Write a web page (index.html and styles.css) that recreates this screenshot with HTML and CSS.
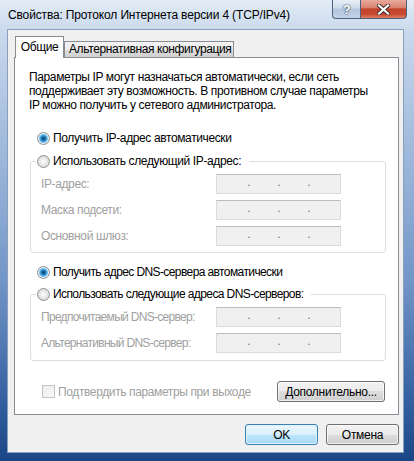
FILE: index.html
```html
<!DOCTYPE html>
<html lang="ru">
<head>
    <meta charset="UTF-8">
    <title>Свойства: Протокол Интернета версии 4 (TCP/IPv4)</title>
    <link rel="stylesheet" href="styles.css">
</head>
<body>
    <div class="window">
        <div class="titlebar">
            <span class="title">Свойства: Протокол Интернета версии 4 (TCP/IPv4)</span>
            <div class="caption-buttons">
                <span class="cap-btn help">?</span>
                <span class="cap-btn close">
                    <svg width="13" height="11" viewBox="0 0 13 11">
                        <path d="M2 1.5 L11 9.5 M11 1.5 L2 9.5" stroke="#3b2a28" stroke-width="4" stroke-linecap="square"/>
                        <path d="M2 1.5 L11 9.5 M11 1.5 L2 9.5" stroke="#ffffff" stroke-width="2.2" stroke-linecap="square"/>
                    </svg>
                </span>
            </div>
        </div>

        <div class="client">
            <div class="tabs">
                <span class="tab active">Общие</span>
                <span class="tab">Альтернативная конфигурация</span>
            </div>

            <div class="panel">
                <p class="intro">Параметры IP могут назначаться автоматически, если сеть<br>поддерживает эту возможность. В противном случае параметры<br>IP можно получить у сетевого администратора.</p>

                <div class="radio-row first"><span class="radio checked"></span>Получить IP-адрес автоматически</div>
                <fieldset class="group">
                    <legend class="radio-row"><span class="radio"></span>Использовать следующий IP-адрес:</legend>
                    <div class="field"><span class="field-label">IP-адрес:</span><span class="ip-box"><span>.</span><span>.</span><span>.</span></span></div>
                    <div class="field"><span class="field-label">Маска подсети:</span><span class="ip-box"><span>.</span><span>.</span><span>.</span></span></div>
                    <div class="field"><span class="field-label">Основной шлюз:</span><span class="ip-box"><span>.</span><span>.</span><span>.</span></span></div>
                </fieldset>

                <div class="radio-row second dns"><span class="radio checked"></span>Получить адрес DNS-сервера автоматически</div>
                <fieldset class="group dns">
                    <legend class="radio-row"><span class="radio"></span>Использовать следующие адреса DNS-серверов:</legend>
                    <div class="field"><span class="field-label">Предпочитаемый DNS-сервер:</span><span class="ip-box"><span>.</span><span>.</span><span>.</span></span></div>
                    <div class="field"><span class="field-label">Альтернативный DNS-сервер:</span><span class="ip-box"><span>.</span><span>.</span><span>.</span></span></div>
                </fieldset>

                <div class="panel-footer">
                    <span class="check-row"><span class="checkbox"></span>Подтвердить параметры при выходе</span>
                    <button class="btn advanced">Дополнительно...</button>
                </div>
            </div>

            <div class="dialog-buttons">
                <button class="btn default">OK</button>
                <button class="btn">Отмена</button>
            </div>
        </div>
    </div>
</body>
</html>
```

FILE: styles.css
```css
body {
    margin: 0;
    font-family: "Liberation Sans", "DejaVu Sans", sans-serif;
    font-size: 12px;
    letter-spacing: -0.38px;
    color: #000;
}

.window {
    width: 414px;
    height: 461px;
    box-sizing: border-box;
    display: flex;
    flex-direction: column;
    background: linear-gradient(to bottom, #e3ecf6 0px, #cbdaed 29px, #a9c1df 120px, #7396c8 280px, #2f5c9d 410px, #1b4686 461px);
}

/* title bar */
.titlebar {
    height: 29px;
    display: flex;
    align-items: flex-start;
}

.title {
    flex: 1;
    padding: 8px 0 0 8px;
    line-height: 14px;
    letter-spacing: -0.15px;
    white-space: nowrap;
}

.caption-buttons {
    display: flex;
    margin-right: 7px;
}

.cap-btn {
    height: 19px;
    box-sizing: border-box;
    border: 1px solid #4f6180;
    border-top: none;
    display: flex;
    align-items: center;
    justify-content: center;
}

.help {
    width: 29px;
    border-radius: 0 0 0 4px;
    background: linear-gradient(to bottom, #e7eef7, #cfdbea 45%, #b3c6dd 50%, #c3d3e7);
    color: #fff;
    font-weight: bold;
    font-size: 13px;
    text-shadow: 0 0 2px #2c3e58, 0 0 1px #2c3e58;
}

.close {
    width: 46px;
    border-left: none;
    border-radius: 0 0 4px 0;
    background: linear-gradient(to bottom, #e9aa9c, #d88270 42%, #c2432d 50%, #c7472f 78%, #de7d5f);
}

/* client area */
.client {
    flex: 1;
    margin: 0 10px 8px 7px;
    border: 1px solid #8a9ebd;
    background: #f0f0f0;
    padding: 6px 4px 0 6px;
    display: flex;
    flex-direction: column;
}

.tabs {
    display: flex;
    align-items: flex-end;
    height: 21px;
    padding-left: 1px;
}

.tab {
    box-sizing: border-box;
    height: 16px;
    width: 170px;
    border: 1px solid #898c95;
    border-bottom: none;
    padding-left: 4px;
    line-height: 15px;
    background: linear-gradient(to bottom, #f3f3f3, #ebebeb 50%, #dddddd 50%, #d0d0d0);
    white-space: nowrap;
}

.tab.active {
    position: relative;
    z-index: 1;
    height: 22px;
    width: 49px;
    margin-bottom: -1px;
    padding: 3px 0 0 0;
    text-align: center;
    background: #fff;
}

.panel {
    width: 385px;
    height: 358px;
    box-sizing: border-box;
    border: 1px solid #898c95;
    background: #fff;
    padding: 12px 12px 0 15px;
    display: flex;
    flex-direction: column;
}

.intro {
    margin: 0 0 0 -1px;
    line-height: 14px;
    white-space: nowrap;
}

.radio-row {
    display: flex;
    align-items: center;
    height: 16px;
    white-space: nowrap;
}

.radio-row.first {
    margin-top: 18px;
    padding-left: 7px;
}

.radio-row.second {
    margin-top: 11px;
    padding-left: 7px;
}

/* the DNS lines run a little wider in Liberation Sans */
.dns,
.dns legend {
    letter-spacing: -0.6px;
}

.dns .field-label {
    letter-spacing: -0.7px;
}

.radio {
    width: 13px;
    height: 13px;
    box-sizing: border-box;
    border-radius: 50%;
    border: 1px solid #8d8f91;
    margin-right: 3px;
    background: radial-gradient(circle at 50% 50%, #ffffff 0, #ececec 35%, #cfcfcf 100%);
}

.radio.checked {
    background: radial-gradient(circle at 50% 50%, #123f6a 0, #1d6da8 1.8px, #3b9ad6 3px, #8bcbf0 4.2px, #e4f1fa 5px, #d8d8d8 6px);
}

.group {
    margin: 7px 0 0 0;
    padding: 5px 0 6px 0;
    border: 1px solid #d5dfe5;
    border-radius: 3px;
    min-width: 0;
}

.group legend {
    margin-left: 5px;
    padding: 0 8px 0 1px;
}

.radio-row.second + .group {
    margin-top: 6px;
    padding-bottom: 7px;
}

.field {
    display: flex;
    align-items: center;
    height: 20px;
    padding-left: 10px;
    margin-top: 6px;
    color: #a0a0a0;
}

.field:first-of-type {
    margin-top: 0;
}

.field-label {
    width: 175px;
}

.ip-box {
    width: 125px;
    height: 20px;
    box-sizing: border-box;
    border: 1px solid #d9dbdf;
    border-top-color: #b9bcc1;
    background: #f0f0f0;
    padding-left: 17px;
    display: flex;
    line-height: 15px;
    color: #707070;
    letter-spacing: 0;
}

.ip-box span {
    width: 30px;
    text-align: center;
}

.panel-footer {
    margin-top: auto;
    margin-bottom: 12px;
    display: flex;
    align-items: center;
    justify-content: space-between;
    padding-left: 12px;
    margin-right: 1px;
}

.check-row {
    display: flex;
    align-items: center;
    color: #a0a0a0;
}

.checkbox {
    width: 13px;
    height: 13px;
    box-sizing: border-box;
    border: 1px solid #c4c4c4;
    background: linear-gradient(to bottom right, #ececec, #f9f9f9);
    margin-right: 3px;
}

/* buttons */
.btn {
    font-family: inherit;
    font-size: 12px;
    letter-spacing: -0.3px;
    color: #000;
    height: 21px;
    box-sizing: border-box;
    border: 1px solid #707070;
    border-radius: 3px;
    padding: 0;
    background: linear-gradient(to bottom, #f2f2f2, #ebebeb 50%, #dddddd 50%, #cfcfcf);
    box-shadow: inset 0 0 0 1px rgba(255, 255, 255, 0.7);
}

.advanced {
    width: 108px;
}

.dialog-buttons {
    display: flex;
    justify-content: flex-end;
    gap: 8px;
    margin-top: 9px;
}

.dialog-buttons .btn {
    width: 73px;
}

.btn.default {
    border-color: #3c7fb1;
    background: linear-gradient(to bottom, #eaf6fd, #d9f0fc 50%, #bee6fd 50%, #a7d9f5);
    box-shadow: inset 0 0 0 1px #dff1fb;
}
```
